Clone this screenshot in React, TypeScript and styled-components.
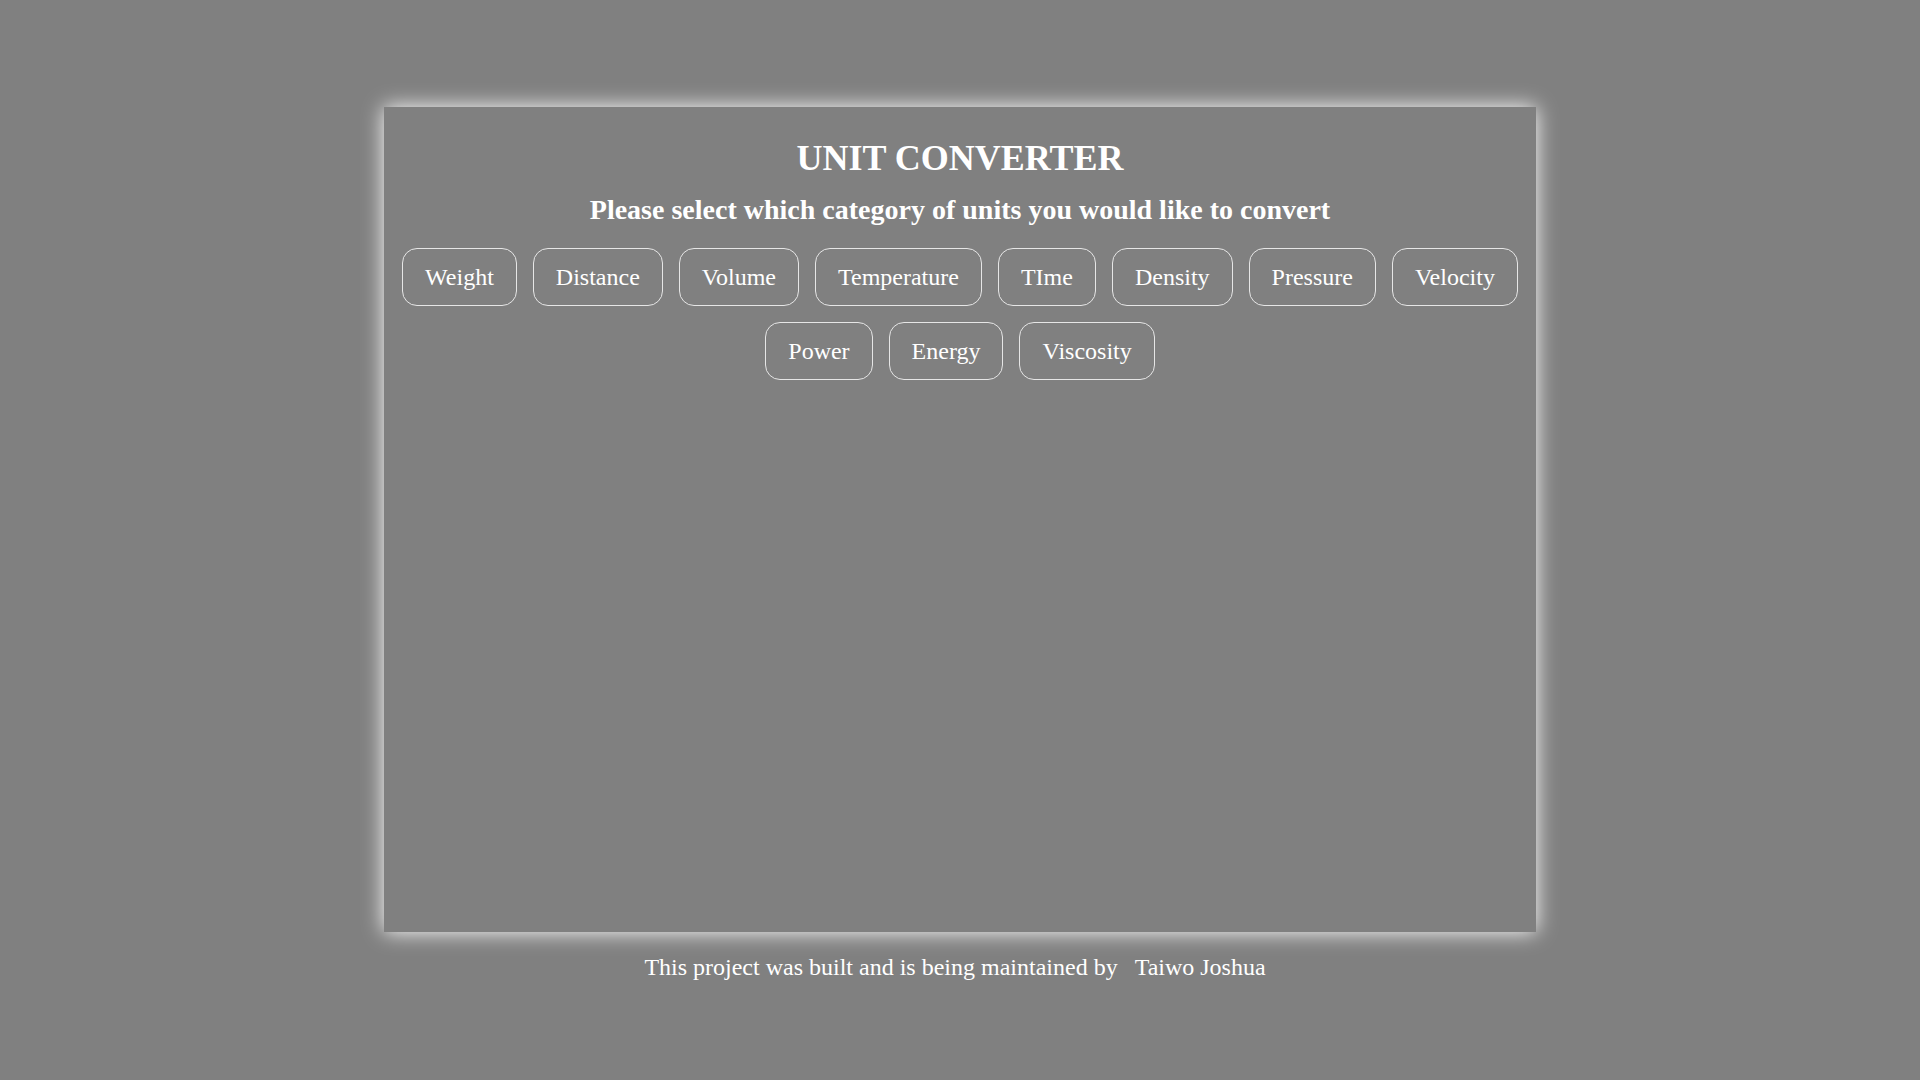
import React from 'react'
import styled, { createGlobalStyle } from 'styled-components'

const categories = [
  'Weight',
  'Distance',
  'Volume',
  'Temperature',
  'TIme',
  'Density',
  'Pressure',
  'Velocity',
  'Power',
  'Energy',
  'Viscosity',
]

export default function App() {
  return (
    <>
      <GlobalStyle />
      <Page>
        <Panel>
          <Title>UNIT CONVERTER</Title>
          <Subtitle>Please select which category of units you would like to convert</Subtitle>
          <Categories>
            {categories.map((c) => (
              <CategoryButton key={c}>{c}</CategoryButton>
            ))}
          </Categories>
        </Panel>
        <Footer>
          This project was built and is being maintained by <Author href="#">Taiwo Joshua</Author>
        </Footer>
      </Page>
    </>
  )
}

const GlobalStyle = createGlobalStyle`
  html, body {
    margin: 0;
    padding: 0;
    background: #808080;
    font-family: "Liberation Serif", "Times New Roman", serif;
    color: #fff;
  }
`

const Page = styled.main`
  min-height: 100vh;
  padding-top: 107px;
  box-sizing: border-box;
  display: flex;
  flex-direction: column;
  align-items: center;
`

const Panel = styled.section`
  width: 1152px;
  height: 825px;
  box-sizing: border-box;
  background: #808080;
  box-shadow: 0 0 20px #fff;
  padding-top: 30px;
  display: flex;
  flex-direction: column;
  align-items: center;
`

const Title = styled.h1`
  margin: 0;
  font-size: 36px;
  font-weight: 700;
  line-height: normal;
`

const Subtitle = styled.h2`
  margin: 15px 0 14px;
  font-size: 28px;
  font-weight: 700;
  line-height: normal;
`

const Categories = styled.div`
  width: 100%;
  display: flex;
  flex-wrap: wrap;
  justify-content: center;
`

const CategoryButton = styled.button`
  margin: 8px;
  padding: 14.5px 22px;
  background: transparent;
  border: 1px solid #e6e6e6;
  border-radius: 15px;
  color: #fff;
  font-family: "Liberation Serif", "Times New Roman", serif;
  font-size: 24px;
  line-height: normal;
  cursor: pointer;
`

const Footer = styled.p`
  margin: 22px 0 0;
  font-size: 24px;
  line-height: normal;
  text-align: center;
`

const Author = styled.a`
  margin: 0 10px 0 11px;
  color: #fff;
  text-decoration: none;
`
